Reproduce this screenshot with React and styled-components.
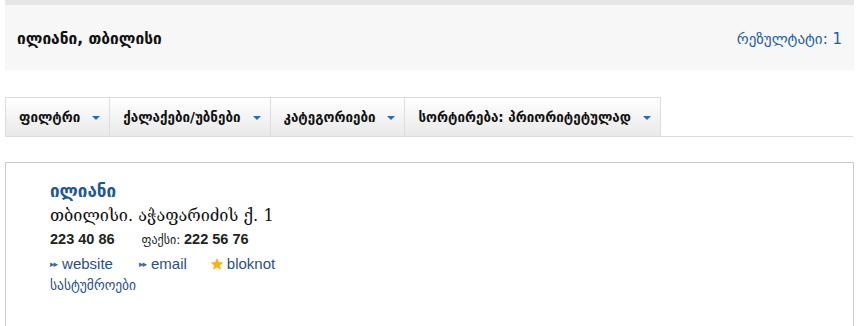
import React from "react";
import styled, { createGlobalStyle } from "styled-components";

const Global = createGlobalStyle`
  html, body { margin: 0; padding: 0; background: #fff; }
  body { font-family: "Liberation Sans", "DejaVu Sans", sans-serif; color: #222; }
`;

const Page = styled.div`
  width: 849px;
  margin-left: 5px;
  border-top: 5px solid #e6e6e6;
`;

const Header = styled.div`
  height: 65px;
  background: #f7f7f7;
  display: flex;
  align-items: center;
  justify-content: space-between;
  padding: 0 12px 0 12px;
`;

const Title = styled.h1`
  margin: 0;
  font-family: "DejaVu Sans", sans-serif;
  font-size: 15.5px;
  font-weight: bold;
  color: #111;
  padding-top: 2px;
`;

const Results = styled.a`
  font-family: "DejaVu Sans", sans-serif;
  font-size: 15px;
  color: #24609c;
  text-decoration: none;
  padding-top: 2px;
`;

const FilterBar = styled.div`
  margin-top: 27px;
  display: flex;
  border-bottom: 1px solid #ddd;
  width: 848px;
`;

const Tab = styled.div`
  height: 38px;
  display: flex;
  align-items: center;
  gap: 12px;
  padding: 0 9px 0 13px;
  border: 1px solid #ddd;
  border-bottom: none;
  margin-right: -1px;
  background: linear-gradient(#ffffff, #e9e9e9);
  font-family: "DejaVu Sans", sans-serif;
  font-size: 13.4px;
  font-weight: bold;
  color: #111;
  white-space: nowrap;
`;

const Caret = styled.span`
  width: 0;
  height: 0;
  border-left: 4px solid transparent;
  border-right: 4px solid transparent;
  border-top: 4px solid #276bb0;
  margin-top: 2px;
`;

const Card = styled.div`
  margin-top: 25px;
  border: 1px solid #ccc;
  height: 180px;
  padding: 18px 0 0 44px;
`;

const Name = styled.a`
  display: block;
  font-family: "DejaVu Sans", sans-serif;
  font-size: 17px;
  font-weight: bold;
  color: #1f5895;
  text-decoration: none;
  line-height: 20px;
`;

const Address = styled.div`
  margin-top: 5px;
  font-family: "DejaVu Serif", "DejaVu Sans", serif;
  font-size: 16.3px;
  color: #111;
  line-height: 20px;
`;

const Phones = styled.div`
  margin-top: 4px;
  font-size: 14.5px;
  line-height: 18px;
  color: #222;
  display: flex;
  gap: 27px;
  b { font-weight: bold; }
`;

const Label = styled.span`
  font-family: "DejaVu Sans", sans-serif;
  font-size: 12px;
`;

const Links = styled.div`
  margin-top: 6px;
  display: flex;
  font-size: 15px;
  line-height: 18px;
`;

const LinkItem = styled.a`
  color: #2c4f86;
  text-decoration: none;
  display: inline-flex;
  align-items: center;
  gap: 2px;
  margin-right: ${(p) => p.$space}px;
`;

const Arrows = styled.span`
  font-size: 9px;
  color: #3b67a6;
  letter-spacing: -1px;
  margin-right: 3px;
`;

const Category = styled.a`
  display: block;
  margin-top: 4px;
  font-family: "DejaVu Sans", sans-serif;
  font-size: 13.5px;
  color: #2c4f86;
  text-decoration: none;
`;

const Star = () => (
  <svg width="14" height="14" viewBox="0 0 24 24" style={{ marginRight: 1 }}>
    <path d="M12 1.5l3.2 7 7.6.8-5.7 5.1 1.6 7.5L12 18l-6.7 3.9 1.6-7.5L1.2 9.3l7.6-.8z" fill="#f5b321" />
  </svg>
);

export default function App() {
  return (
    <>
      <Global />
      <Page>
        <Header>
          <Title>ილიანი, თბილისი</Title>
          <Results href="#">რეზულტატი: 1</Results>
        </Header>
        <FilterBar>
          <Tab>ფილტრი <Caret /></Tab>
          <Tab>ქალაქები/უბნები <Caret /></Tab>
          <Tab>კატეგორიები <Caret /></Tab>
          <Tab>სორტირება: პრიორიტეტულად <Caret /></Tab>
        </FilterBar>
        <Card>
          <Name href="#">ილიანი</Name>
          <Address>თბილისი. აჭაფარიძის ქ. 1</Address>
          <Phones>
            <b>223 40 86</b>
            <span><Label>ფაქსი: </Label><b>222 56 76</b></span>
          </Phones>
          <Links>
            <LinkItem href="#" $space={26}><Arrows>▸▸</Arrows>website</LinkItem>
            <LinkItem href="#" $space={23}><Arrows>▸▸</Arrows>email</LinkItem>
            <LinkItem href="#" $space={0}><Star />bloknot</LinkItem>
          </Links>
          <Category href="#">სასტუმროები</Category>
        </Card>
      </Page>
    </>
  );
}
